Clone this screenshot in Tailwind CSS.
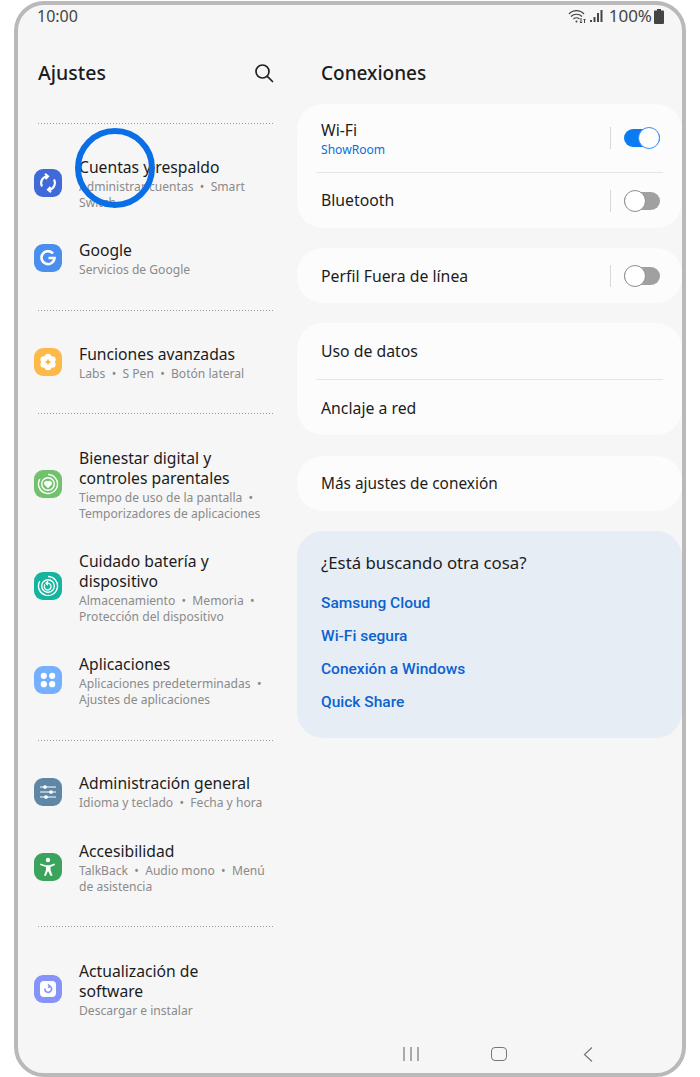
<!DOCTYPE html>
<html lang="es">
<head>
  <meta charset="UTF-8">
  <title>Ajustes</title>
  <script src="https://cdn.jsdelivr.net/npm/@tailwindcss/browser@4"></script>
</head>
<body class="bg-white font-['Noto_Sans',sans-serif] text-[#1c1c1c]">

  <div class="relative ml-[14px] mt-px w-[672px] h-[1076px] border-[4px] border-[#b9b9b9] rounded-[30px] overflow-hidden bg-[#f6f6f6]">

    <!-- status bar -->
    <div class="flex items-center justify-between h-[22px] pl-[19px] pr-[18px] text-[#444] text-[16px] leading-[22px]">
      <span>10:00</span>
      <div class="flex items-center">
        <svg width="19" height="15" viewBox="0 0 19 15" fill="none" stroke="#444" stroke-width="1.2"><path d="M1 5c4-4.500 11-4.500 15 0M3 7.500c3-3 8-3 11 0M5.500 10c1.800-1.500 4.200-1.500 6 0"/><circle cx="8.500" cy="12.500" r="1" fill="#444" stroke="none"/><path d="M13 9v5M11.800 12.800l1.200 1.200 1.200-1.200M16.500 14v-4M15.500 11l1-1 1 1" stroke-width="1"/></svg>
        <svg class="ml-[3px]" width="13" height="14" viewBox="0 0 13 14" fill="#444"><rect x="0" y="11" width="2" height="2"/><rect x="3.500" y="8" width="2" height="5"/><rect x="7" y="4" width="2" height="9"/><rect x="10.500" y="1" width="2" height="12"/></svg>
        <span class="ml-[6px] text-[17px]">100%</span>
        <svg class="ml-[2px]" width="10" height="15" viewBox="0 0 10 15" fill="#444"><path d="M3 0h4v1.500h2a1 1 0 0 1 1 1V14a1 1 0 0 1-1 1H1a1 1 0 0 1-1-1V2.500a1 1 0 0 1 1-1h2z"/></svg>
      </div>
    </div>

    <div class="flex">
      <!-- left column -->
      <div class="w-[279px] shrink-0 pl-5">
        <div class="flex items-center justify-between h-[30px] mt-[31px] pr-[23px]">
          <h1 class="text-[19.500px] font-medium">Ajustes</h1>
          <svg width="20" height="20" viewBox="0 0 20 20" fill="none" stroke="#222" stroke-width="1.700"><circle cx="8.500" cy="8.500" r="6.500"/><path d="M13.300 13.300L18.500 18.500" stroke-linecap="round"/></svg>
        </div>

        <div class="h-px w-[236px] mt-[35px] bg-[linear-gradient(to_right,#999_1px,transparent_1px)] bg-[length:3px_1px]"></div>

        <div class="flex flex-col gap-[29px] pt-[33px] pb-[32px] -ml-1">
          <div class="flex items-center gap-[17px]">
            <div class="w-7 h-7 rounded-[9px] bg-[#3f6ad8] flex items-center justify-center shrink-0 -mt-[3px]">
              <svg width="20" height="20" viewBox="0 0 20 20" fill="none" stroke="#fff" stroke-width="2.100"><path d="M4 13.500A7 7 0 0 1 9 3.200M16 6.500A7 7 0 0 1 11 16.800"/><path d="M7 .8l3 2.500-2.500 2.700M13 19.200l-3-2.500 2.500-2.700"/></svg>
            </div>
            <div class="w-[196px]">
              <p class="text-[15.700px] leading-5">Cuentas y respaldo</p>
              <p class="mt-[2px] text-[12.100px] leading-4 text-[#8a8a8a]">Administrar cuentas &nbsp;•&nbsp; Smart Switch</p>
            </div>
          </div>
          <div class="flex items-center gap-[17px]">
            <div class="w-7 h-7 rounded-[9px] bg-[#4a8ff0] flex items-center justify-center shrink-0 -mt-[2px]">
              <svg width="16" height="16" viewBox="0 0 16 16" fill="none" stroke="#fff" stroke-width="2.600"><path d="M13 3.500A6.500 6.500 0 1 0 14.500 8H8.500"/></svg>
            </div>
            <div class="w-[196px]">
              <p class="text-[15.700px] leading-5">Google</p>
              <p class="mt-[2px] text-[12.100px] leading-4 text-[#8a8a8a]">Servicios de Google</p>
            </div>
          </div>
        </div>

        <div class="h-px w-[236px] bg-[linear-gradient(to_right,#999_1px,transparent_1px)] bg-[length:3px_1px]"></div>

        <div class="pt-[33px] pb-[31px] -ml-1">
          <div class="flex items-center gap-[17px]">
            <div class="w-7 h-7 rounded-[9px] bg-[#fdb94a] flex items-center justify-center shrink-0 -mt-[2px]">
              <svg width="18" height="18" viewBox="0 0 18 18" fill="#fff"><circle cx="9" cy="4" r="3.300"/><circle cx="9" cy="14" r="3.300"/><circle cx="4.700" cy="6.500" r="3.300"/><circle cx="13.300" cy="6.500" r="3.300"/><circle cx="4.700" cy="11.500" r="3.300"/><circle cx="13.300" cy="11.500" r="3.300"/><path d="M6.500 9h5M9 6.500v5" stroke="#fdb94a" stroke-width="1.800"/></svg>
            </div>
            <div class="w-[196px]">
              <p class="text-[15.700px] leading-5">Funciones avanzadas</p>
              <p class="mt-[2px] text-[12.100px] leading-4 text-[#8a8a8a]">Labs &nbsp;•&nbsp; S Pen &nbsp;•&nbsp; Botón lateral</p>
            </div>
          </div>
        </div>

        <div class="h-px w-[236px] bg-[linear-gradient(to_right,#999_1px,transparent_1px)] bg-[length:3px_1px]"></div>

        <div class="flex flex-col gap-[29px] pt-[34px] pb-[32px] -ml-1">
          <div class="flex items-center gap-[17px]">
            <div class="w-7 h-7 rounded-[9px] bg-[#72c16c] flex items-center justify-center shrink-0 -mt-[3px]">
              <svg width="22" height="22" viewBox="0 0 22 22" fill="none" stroke="#fff" stroke-width="1.400"><path d="M11 1.500a9.500 9.500 0 1 1-8.200 4.700"/><circle cx="11" cy="11" r="6.300"/><path d="M11 15.200l-3.800-3.800a2.400 2.400 0 0 1 3.800-2.800 2.400 2.400 0 0 1 3.800 2.800z" fill="#fff" stroke="none"/></svg>
            </div>
            <div class="w-[196px]">
              <p class="text-[15.700px] leading-5">Bienestar digital y controles parentales</p>
              <p class="mt-[2px] text-[12.100px] leading-4 text-[#8a8a8a]">Tiempo de uso de la pantalla &nbsp;• Temporizadores de aplicaciones</p>
            </div>
          </div>
          <div class="flex items-center gap-[17px]">
            <div class="w-7 h-7 rounded-[9px] bg-[#14b49e] flex items-center justify-center shrink-0 -mt-[4px]">
              <svg width="22" height="22" viewBox="0 0 22 22" fill="none" stroke="#fff" stroke-width="1.400"><path d="M11 1.500a9.500 9.500 0 1 1-8.200 4.700"/><circle cx="11" cy="11" r="6.300"/><path d="M8 9.500a3.400 3.400 0 1 0 3-1.300H9M11 6.200L9 8.200l2 2" stroke-width="1.300"/></svg>
            </div>
            <div class="w-[196px]">
              <p class="text-[15.700px] leading-5">Cuidado batería y dispositivo</p>
              <p class="mt-[2px] text-[12.100px] leading-4 text-[#8a8a8a]">Almacenamiento &nbsp;•&nbsp; Memoria &nbsp;• Protección del dispositivo</p>
            </div>
          </div>
          <div class="flex items-center gap-[17px]">
            <div class="w-7 h-7 rounded-[9px] bg-[#74b0fb] flex items-center justify-center shrink-0 -mt-[3px]">
              <svg width="16" height="16" viewBox="0 0 16 16" fill="#fff"><circle cx="3.800" cy="3.800" r="3.100"/><circle cx="12.200" cy="3.800" r="3.100"/><circle cx="3.800" cy="12.200" r="3.100"/><circle cx="12.200" cy="12.200" r="3.100"/></svg>
            </div>
            <div class="w-[196px]">
              <p class="text-[15.700px] leading-5">Aplicaciones</p>
              <p class="mt-[2px] text-[12.100px] leading-4 text-[#8a8a8a]">Aplicaciones predeterminadas &nbsp;• Ajustes de aplicaciones</p>
            </div>
          </div>
        </div>

        <div class="h-px w-[236px] bg-[linear-gradient(to_right,#999_1px,transparent_1px)] bg-[length:3px_1px]"></div>

        <div class="flex flex-col gap-[30px] pt-[32px] pb-[31px] -ml-1">
          <div class="flex items-center gap-[17px]">
            <div class="w-7 h-7 rounded-[9px] bg-[#5f87a5] flex items-center justify-center shrink-0">
              <svg width="18" height="16" viewBox="0 0 18 16" fill="#fff" stroke="#fff" stroke-width="1.100"><path d="M1 3h16M1 8h16M1 13h16"/><circle cx="6" cy="3" r="1.300"/><circle cx="12" cy="8" r="1.300"/><circle cx="7" cy="13" r="1.300"/></svg>
            </div>
            <div class="w-[196px]">
              <p class="text-[15.700px] leading-5">Administración general</p>
              <p class="mt-[2px] text-[12.100px] leading-4 text-[#8a8a8a]">Idioma y teclado &nbsp;•&nbsp; Fecha y hora</p>
            </div>
          </div>
          <div class="flex items-center gap-[17px]">
            <div class="w-7 h-7 rounded-[9px] bg-[#3aa45c] flex items-center justify-center shrink-0 -mt-[2px]">
              <svg width="18" height="20" viewBox="0 0 18 20" fill="#fff"><circle cx="9" cy="3" r="2.200"/><path d="M1.500 6.500l5 1.800h4l5-1.800.5 1.500-4.500 2V13l2 5.500-1.800.5L9 14l-2.200 5-1.800-.5L7 13v-3L1 8z"/></svg>
            </div>
            <div class="w-[196px]">
              <p class="text-[15.700px] leading-5">Accesibilidad</p>
              <p class="mt-[2px] text-[12.100px] leading-4 text-[#8a8a8a]">TalkBack &nbsp;•&nbsp; Audio mono &nbsp;•&nbsp; Menú de asistencia</p>
            </div>
          </div>
        </div>

        <div class="h-px w-[236px] bg-[linear-gradient(to_right,#999_1px,transparent_1px)] bg-[length:3px_1px]"></div>

        <div class="pt-[34px] -ml-1">
          <div class="flex items-center gap-[17px]">
            <div class="w-7 h-7 rounded-[9px] bg-[#8593fa] flex items-center justify-center shrink-0 -mt-[2px]">
              <div class="w-4 h-4 rounded-[4px] bg-white flex items-center justify-center">
                <svg width="10" height="10" viewBox="0 0 10 10" fill="none" stroke="#8593fa" stroke-width="1.600"><path d="M6.500 2A3.300 3.300 0 1 1 2 4.500M5 .5l2 1.700-2 1.500"/></svg>
              </div>
            </div>
            <div class="w-[196px]">
              <p class="text-[15.700px] leading-5">Actualización de<br>software</p>
              <p class="mt-[2px] text-[12.100px] leading-4 text-[#8a8a8a]">Descargar e instalar</p>
            </div>
          </div>
        </div>
      </div>

      <!-- right column -->
      <div class="flex-1 min-w-0">
        <h2 class="h-[30px] mt-[31px] ml-[24px] text-[19px] font-medium flex items-center">Conexiones</h2>

        <div class="mt-[16px] bg-[#fcfcfc] rounded-[26px] h-[124px] flex flex-col">
          <div class="h-[68px] flex items-center justify-between pl-[24px] pr-[22px]">
            <div class="mt-px">
              <p class="text-[15.800px] leading-5">Wi-Fi</p>
              <p class="mt-[2px] text-[12.100px] leading-4 text-[#0a6fd8]">ShowRoom</p>
            </div>
            <div class="flex items-center gap-[13px]">
              <div class="w-px h-[22px] bg-[#d8d8d8]"></div>
              <div class="relative w-9 h-[18px] rounded-full bg-[#0a7cf2]">
                <div class="absolute right-0 -top-[2px] w-[22px] h-[22px] rounded-full bg-white border border-[#3b8ff0]"></div>
              </div>
            </div>
          </div>
          <div class="h-px mx-[19px] bg-[#e4e4e4]"></div>
          <div class="flex-1 flex items-center justify-between pl-[24px] pr-[22px]">
            <p class="-mt-px text-[15.800px] leading-5">Bluetooth</p>
            <div class="flex items-center gap-[13px]">
              <div class="w-px h-[22px] bg-[#d8d8d8]"></div>
              <div class="relative w-9 h-[18px] rounded-full bg-[#a0a0a0]">
                <div class="absolute left-0 -top-[2px] w-[22px] h-[22px] rounded-full bg-white border border-[#8f8f8f]"></div>
              </div>
            </div>
          </div>
        </div>

        <div class="mt-[20px] bg-[#fcfcfc] rounded-[26px] h-[55px] flex items-center justify-between pl-[24px] pr-[22px]">
          <p class="text-[15.800px] leading-5">Perfil Fuera de línea</p>
          <div class="flex items-center gap-[13px]">
            <div class="w-px h-[22px] bg-[#d8d8d8]"></div>
            <div class="relative w-9 h-[18px] rounded-full bg-[#a0a0a0]">
              <div class="absolute left-0 -top-[2px] w-[22px] h-[22px] rounded-full bg-white border border-[#8f8f8f]"></div>
            </div>
          </div>
        </div>

        <div class="mt-[20px] bg-[#fcfcfc] rounded-[26px] h-[112px] flex flex-col">
          <div class="flex-1 flex items-center pl-[24px]"><p class="mt-px text-[15.800px] leading-5">Uso de datos</p></div>
          <div class="h-px mx-[19px] bg-[#e4e4e4]"></div>
          <div class="flex-1 flex items-center pl-[24px]"><p class="mt-px text-[15.800px] leading-5">Anclaje a red</p></div>
        </div>

        <div class="mt-[21px] bg-[#fcfcfc] rounded-[26px] h-[55px] flex items-center pl-[24px]">
          <p class="text-[15.400px] leading-5">Más ajustes de conexión</p>
        </div>

        <div class="mt-[20px] bg-[#e7edf4] rounded-[26px] h-[207px] pl-[24px] pt-[21px]">
          <p class="text-[16.800px] leading-[22px]">¿Está buscando otra cosa?</p>
          <div class="mt-[19px] flex flex-col gap-[13px] font-['Roboto',sans-serif] text-[15.500px] leading-5 font-medium text-[#0a63d0]">
            <p>Samsung Cloud</p>
            <p>Wi-Fi segura</p>
            <p>Conexión a Windows</p>
            <p>Quick Share</p>
          </div>
        </div>
      </div>
    </div>

    <!-- nav bar -->
    <div class="absolute bottom-[12px] left-0 right-0 h-[14px] pl-[385px] flex items-center text-[#777]">
      <svg width="16" height="14" viewBox="0 0 16 14" fill="none" stroke="#777" stroke-width="1.200"><path d="M1 0v14M8 0v14M15 0v14"/></svg>
      <div class="ml-[72px] w-4 h-[14px] rounded-[4px] border-[1.300px] border-[#777]"></div>
      <svg class="ml-[76px]" width="10" height="15" viewBox="0 0 10 15" fill="none" stroke="#777" stroke-width="1.200"><path d="M9 .5L1.500 7.500 9 14.500"/></svg>
    </div>

    <!-- highlight ring -->
    <div class="absolute left-[57px] top-[123px] w-20 h-20 rounded-full border-[6px] border-[#0a6fe6]"></div>
  </div>

</body>
</html>
